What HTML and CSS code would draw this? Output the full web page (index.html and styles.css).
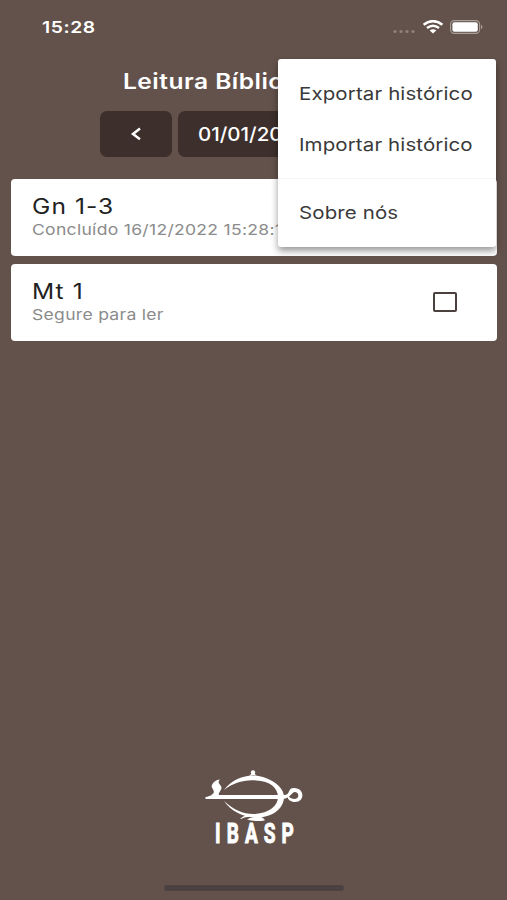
FILE: index.html
```html
<!DOCTYPE html>
<html lang="pt-BR">
<head>
    <meta charset="UTF-8">
    <meta name="viewport" content="width=device-width, initial-scale=1.0">
    <title>Leitura Bíblica</title>
    <link rel="stylesheet" href="styles.css">
</head>
<body>

    <div class="status-bar">
        <span class="time wide">15:28</span>
        <div class="status-icons">
            <svg class="signal" width="24" height="5" viewBox="0 0 24 5">
                <circle cx="3" cy="2.5" r="1.6"/>
                <circle cx="9" cy="2.5" r="1.6"/>
                <circle cx="15" cy="2.5" r="1.6"/>
                <circle cx="21" cy="2.5" r="1.6"/>
            </svg>
            <svg class="wifi" width="22" height="14" viewBox="0 0 22 14">
                <path d="M1.6 4.8Q11-2.6 20.4 4.8M5 8.1Q11 3.3 17 8.1" fill="none" stroke="#fff" stroke-width="2.5"/>
                <path d="M7.7 10.4Q11 7.9 14.3 10.4L11 13.5Z" fill="#fff"/>
            </svg>
            <svg class="battery" width="34" height="14" viewBox="0 0 34 14">
                <rect x=".6" y=".6" width="29" height="12.8" rx="3.6" fill="none" stroke="#a99f9a" stroke-width="1.1"/>
                <rect x="2.4" y="2.3" width="25.4" height="9.4" rx="2" fill="#fff"/>
                <path d="M31 4.8Q34 7 31 9.2Z" fill="#a99f9a"/>
            </svg>
        </div>
    </div>

    <header class="header">
        <h1 class="title wide">Leitura Bíblica</h1>
    </header>

    <nav class="date-nav">
        <button class="nav-btn" aria-label="Dia anterior">
            <svg width="12" height="14" viewBox="0 0 12 14"><path d="M10 1.6L3 7l7 5.2" fill="none" stroke="#fff" stroke-width="2.5"/></svg>
        </button>
        <button class="nav-btn date-btn"><span class="date wide">01/01/2023</span></button>
        <button class="nav-btn" aria-label="Próximo dia">
            <svg width="12" height="14" viewBox="0 0 12 14"><path d="M2 1.6L9 7l-7 5.2" fill="none" stroke="#fff" stroke-width="2.5"/></svg>
        </button>
    </nav>

    <main class="readings">
        <div class="card">
            <div class="card-text">
                <span class="passage wide">Gn 1-3</span>
                <span class="note wide">Concluído 16/12/2022 15:28:10</span>
            </div>
        </div>
        <div class="card">
            <div class="card-text">
                <span class="passage wide">Mt 1</span>
                <span class="note wide">Segure para ler</span>
            </div>
            <span class="checkbox"></span>
        </div>
    </main>

    <!-- Options menu -->
    <div class="menu">
        <a class="menu-item"><span class="wide">Exportar histórico</span></a>
        <a class="menu-item"><span class="wide">Importar histórico</span></a>
        <div class="divider"></div>
        <a class="menu-item"><span class="wide">Sobre nós</span></a>
    </div>

    <footer class="footer">
        <svg class="logo" width="100" height="80" viewBox="0 0 100 80" fill="#fff">
            <!-- lamp body -->
            <path d="M20 20C30 7 46 3 59 7C72 11 80 19 80 27C80 37 71 47 53 47.500C39 47.500 27 41 20 31C30 40 40 44.500 51 44C65 43 74 36 74 27C74 18 66 11 52 10.500C40 9.500 29 13 20 20Z"/>
            <path d="M1 27.500L8 25H80C87 25 83 18 90 18C101 18 101 32 91 32C86 31.500 83 29 84 26C86 28 88 29 91 29C96 28 95 22 90.500 22C87 23 86 28.500 79 29H3Q1 29 1 27.500Z"/>
            <!-- lid, flame and base -->
            <path d="M45 6.500C48 4.500 51 4.500 53 6.500L51 4H47Z"/>
            <circle cx="49" cy="2.500" r="2.200"/>
            <path d="M7 25C14 22 6 18 8 15Q10 10 16 9.500C12 13 18 15 17.500 18C17 21 14 23 15 25Z"/>
            <path d="M36 49C42 43 54 43 61 49.500L58 50C51 46 43 46 37 49Z"/>
            <path d="M43 49.500Q50 44 61 50.500Q50 52 43 49.500Z"/>
            <text class="logo-text" transform="translate(11 73) scale(.68 1)" x="0" y="0" textLength="116" lengthAdjust="spacing">IBASP</text>
        </svg>
        <div class="home-indicator"></div>
    </footer>

</body>
</html>
```
FILE: styles.css
```css
:root {
    --brown: #63524b;
    --brown-dark: #3c2f2c;
}

* {
    box-sizing: border-box;
}

body {
    background: var(--brown);
    color: white;
    font-family: Inter, "Liberation Sans", sans-serif;
    margin: 0;
    height: 900px;
    display: flex;
    flex-direction: column;
    overflow: hidden;
}

/* Extended letterforms */
.wide {
    display: inline-block;
    white-space: nowrap;
    transform: scaleX(1.17);
    transform-origin: left;
}

/* Status bar */
.status-bar {
    height: 54px;
    padding: 0 23px 0 42px;
    display: flex;
    align-items: center;
    justify-content: space-between;
}

.time {
    font-size: 16.5px;
    font-weight: 600;
    letter-spacing: 0.5px;
}

.status-icons {
    display: flex;
    align-items: center;
    gap: 6px;
}

.signal {
    fill: #8f827c;
    margin-top: 9px;
}

/* Header */
.header {
    height: 56px;
    padding: 0 0 1px 123px;
    display: flex;
    align-items: center;
}

.title {
    font-size: 21px;
    font-weight: 600;
    letter-spacing: 0.4px;
    margin: 0;
}

/* Date navigation */
.date-nav {
    display: flex;
    justify-content: center;
    gap: 6px;
    margin-top: 1px;
}

.nav-btn {
    width: 72px;
    height: 46px;
    padding: 0;
    border: none;
    border-radius: 7px;
    background: var(--brown-dark);
    color: white;
    font: inherit;
    display: flex;
    align-items: center;
    justify-content: center;
}

.date-btn {
    width: 152px;
    padding-left: 20px;
    justify-content: flex-start;
}

.date {
    font-size: 19px;
    font-weight: 500;
    transform: scaleX(1.08);
}

/* Readings */
.readings {
    padding: 22px 10px 0 11px;
    display: flex;
    flex-direction: column;
    gap: 9px;
}

.card {
    height: 76.5px;
    padding: 0 40px 0 21px;
    border-radius: 4px;
    background: white;
    display: flex;
    align-items: center;
    justify-content: space-between;
}

.card + .card {
    margin-top: -0.5px;
}

.card-text {
    display: flex;
    flex-direction: column;
    align-items: flex-start;
    padding-bottom: 1px;
}

.passage {
    color: #222;
    font-size: 21px;
    line-height: 26px;
    letter-spacing: 0.9px;
}

.note {
    color: #8b8b8b;
    font-size: 15px;
    line-height: 20px;
    letter-spacing: 0.25px;
}

.checkbox {
    width: 24px;
    height: 20px;
    border: 2px solid #4a403d;
    border-radius: 2px;
}

/* Menu */
.menu {
    position: absolute;
    top: 59px;
    right: 11px;
    width: 218px;
    height: 188px;
    padding-top: 9px;
    border-radius: 3px;
    background: white;
    box-shadow: 0 4px 7px rgba(0, 0, 0, 0.4);
}

.menu-item {
    height: 51px;
    padding-left: 21px;
    display: flex;
    align-items: center;
    color: #3a3a3a;
    font-size: 17.5px;
    letter-spacing: 0.1px;
}

.divider {
    height: 1px;
    margin: 8px 0;
    background: #f5f5f5;
}

/* Footer */
.footer {
    margin-top: auto;
    display: flex;
    flex-direction: column;
    align-items: center;
}

.logo {
    overflow: visible;
}

.logo-text {
    font-family: Roboto, sans-serif;
    font-size: 28px;
    font-weight: 700;
    stroke: white;
    stroke-width: 1px;
}

.home-indicator {
    width: 180px;
    height: 6px;
    margin: 35px 0 9px;
    border-radius: 3px;
    background: #4b4140;
}
```
